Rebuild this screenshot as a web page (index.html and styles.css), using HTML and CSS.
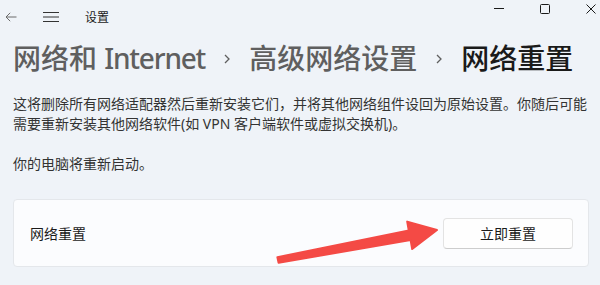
FILE: index.html
```html
<!DOCTYPE html>
<html lang="zh-CN">
<head>
    <meta charset="UTF-8">
    <meta name="viewport" content="width=device-width, initial-scale=1.0">
    <title>设置</title>
    <link rel="stylesheet" href="styles.css">
</head>
<body>
    <div class="window">
        <header class="titlebar">
            <div class="titlebar-left">
                <span class="icon back">
                    <svg width="12" height="10" viewBox="0 0 12 10"><path d="M11.5 5H1M5.2 0.8L1 5l4.2 4.2" fill="none" stroke="#6b6b6b" stroke-width="1"/></svg>
                </span>
                <span class="icon menu">
                    <svg width="16" height="10" viewBox="0 0 16 10"><path d="M0 0.5h16M0 5h16M0 9.5h16" fill="none" stroke="#333" stroke-width="1"/></svg>
                </span>
                <span class="app-title">设置</span>
            </div>
            <div class="window-controls">
                <svg width="10" height="10" viewBox="0 0 10 10"><path d="M0 4.5h10" stroke="#1a1a1a" stroke-width="1"/></svg>
                <svg width="10" height="10" viewBox="0 0 10 10"><rect x="0.5" y="0.5" width="9" height="9" rx="1" fill="none" stroke="#1a1a1a" stroke-width="1"/></svg>
                <svg width="10" height="10" viewBox="0 0 10 10"><path d="M0.5 0.5l9 9M9.5 0.5l-9 9" stroke="#1a1a1a" stroke-width="1"/></svg>
            </div>
        </header>

        <main class="content">
            <h1 class="breadcrumb">
                <span class="crumb">网络和 <span class="latin">Internet</span></span>
                <svg class="sep" width="6" height="10" viewBox="0 0 6 10"><path d="M1 1l4 4-4 4" fill="none" stroke="#5f5f5f" stroke-width="1.3"/></svg>
                <span class="crumb">高级网络设置</span>
                <svg class="sep" width="6" height="10" viewBox="0 0 6 10"><path d="M1 1l4 4-4 4" fill="none" stroke="#5f5f5f" stroke-width="1.3"/></svg>
                <span class="crumb current">网络重置</span>
            </h1>

            <p class="desc">这将删除所有网络适配器然后重新安装它们，并将其他网络组件设回为原始设置。你随后可能需要重新安装其他网络软件(如 VPN 客户端软件或虚拟交换机)。</p>
            <p class="desc">你的电脑将重新启动。</p>

            <div class="card">
                <span class="card-label">网络重置</span>
                <button class="btn">立即重置</button>
            </div>
        </main>

        <!-- 标注箭头 -->
        <svg class="annotation" width="600" height="285" viewBox="0 0 600 285">
            <polygon points="278.6,262.8 410.6,240.0 412.2,249.0 437,230 407.2,221.6 408.8,230.6 277.4,257.2"
                     fill="#f44a45" stroke="#f44a45" stroke-width="2" stroke-linejoin="round"/>
        </svg>
    </div>
</body>
</html>
```

FILE: styles.css
```css
body {
    margin: 0;
    padding: 0;
    background-color: #eff3f8;
    font-family: "Noto Sans", "Noto Sans CJK SC", sans-serif;
    color: #1b1b1b;
    overflow: hidden;
}

.window {
    position: relative;
    width: 600px;
    height: 285px;
}

.titlebar {
    display: flex;
    justify-content: space-between;
    height: 34px;
}

.titlebar-left {
    display: flex;
    align-items: center;
    gap: 26px;
    padding-left: 5px;
}

.icon {
    display: flex;
    align-items: center;
}

.app-title {
    font-size: 12px;
    color: #1b1b1b;
}

.window-controls {
    display: flex;
    align-self: flex-start;
    gap: 36px;
    padding-top: 4px;
    padding-right: 4px;
}

.content {
    padding: 0 11px 0 13px;
}

.breadcrumb {
    display: flex;
    align-items: center;
    gap: 19px;
    margin: 4px 0 0;
    font-size: 28px;
    font-weight: 500;
    line-height: 40px;
    color: #5f5f5f;
    white-space: nowrap;
}

.breadcrumb .latin {
    letter-spacing: -1.2px;
}

.breadcrumb .sep {
    margin-top: 2px;
}

.breadcrumb .current {
    color: #1a1a1a;
}

.desc {
    margin: 16px 0 0;
    font-size: 14px;
    line-height: 20px;
    color: #333;
}

.desc + .desc {
    margin-top: 20px;
}

.card {
    display: flex;
    justify-content: space-between;
    align-items: center;
    height: 66px;
    margin-top: 25px;
    padding: 0 15px 0 16px;
    background-color: #fbfcfe;
    border: 1px solid #e4e7eb;
    border-radius: 4px;
}

.card-label {
    font-size: 14px;
    color: #1b1b1b;
}

.btn {
    width: 130px;
    height: 31px;
    background-color: #fefefe;
    border: 1px solid #e3e3e3;
    border-bottom-color: #cdcdcd;
    border-radius: 4px;
    font-family: "Noto Sans", "Noto Sans CJK SC", sans-serif;
    font-size: 14px;
    color: #1b1b1b;
}

.annotation {
    position: absolute;
    top: 0;
    left: 0;
    pointer-events: none;
}
```
